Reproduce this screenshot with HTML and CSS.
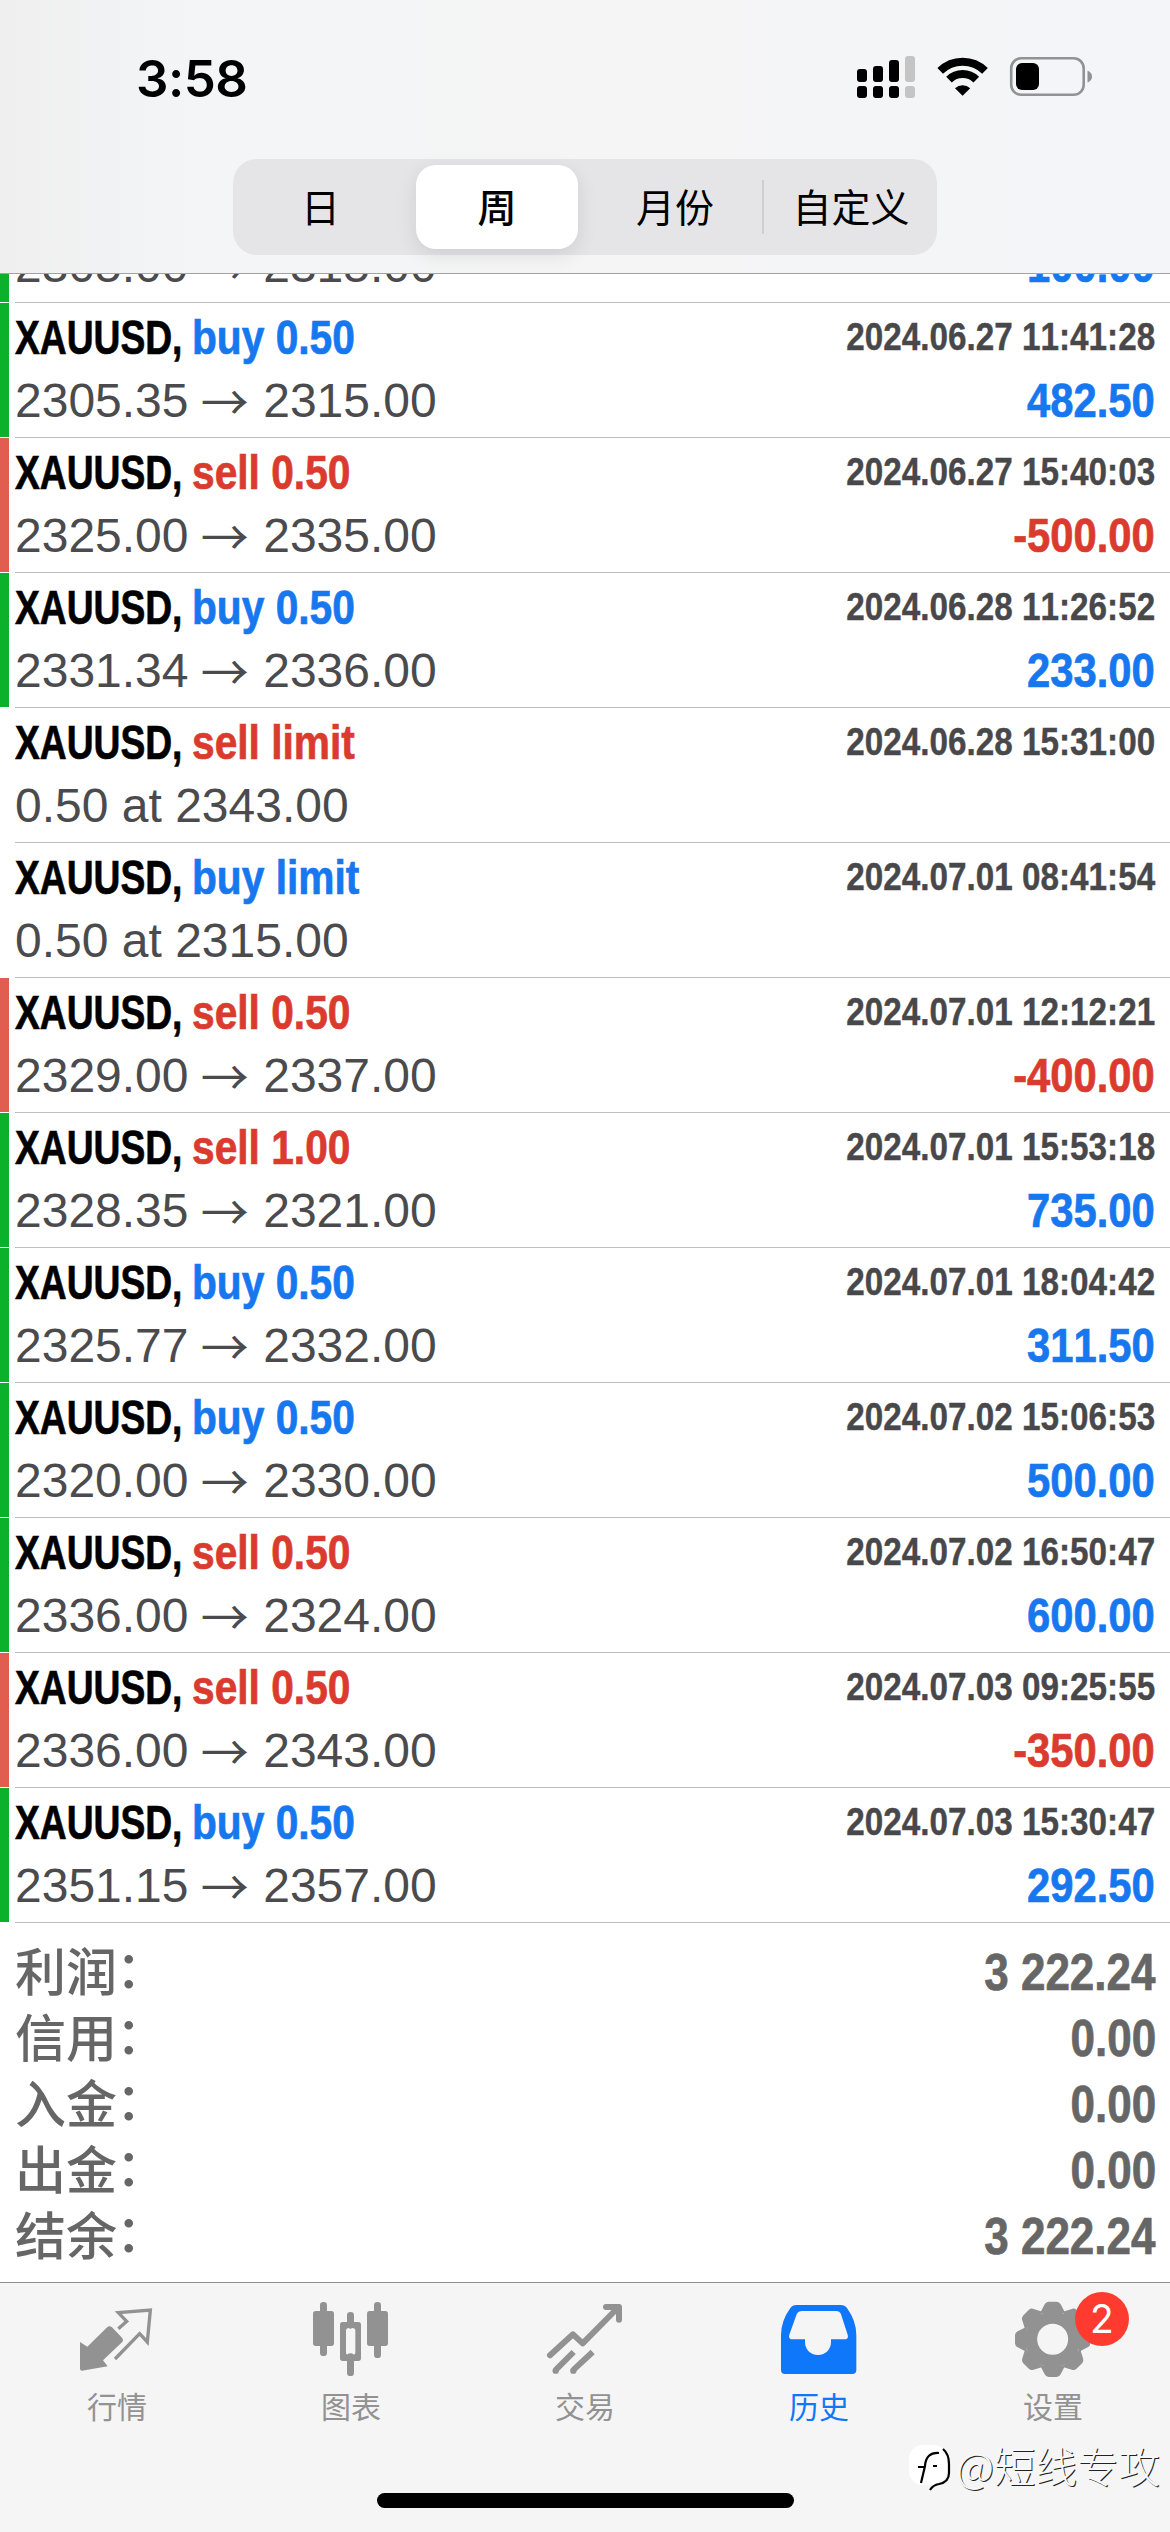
FILE: index.html
```html
<!DOCTYPE html>
<html lang="zh-CN">
<head>
<meta charset="utf-8">
<title>历史</title>
<link rel="stylesheet" href="styles.css">
</head>
<body>
<header class="top">
  <div class="status">
    <span class="time">3:58</span>
    <svg class="status-icons" viewBox="0 0 240 44" width="240" height="44">
      <g><rect x="1" y="15" width="10" height="13" rx="3"/><rect x="17" y="12" width="10" height="16" rx="3"/><rect x="33" y="6" width="10" height="22" rx="3"/><rect x="1" y="32" width="10" height="12" rx="3"/><rect x="17" y="32" width="10" height="12" rx="3"/><rect x="33" y="32" width="10" height="12" rx="3"/></g>
      <g fill="#c4c4c5"><rect x="49" y="2" width="10" height="26" rx="3"/><rect x="49" y="32" width="10" height="12" rx="3"/></g>
      <g fill="none" stroke="#000" stroke-width="8"><path d="M84.200 16.800A32 32 0 0 1 129 16.800"/><path d="M93 25.600A19.500 19.500 0 0 1 120.300 25.600"/></g>
      <path d="M99 34.200A11 11 0 0 1 114.200 34.200L106.600 41.800Z"/>
      <rect x="155.200" y="4.300" width="72.500" height="36.500" rx="10" fill="none" stroke="#929294" stroke-width="2.600"/>
      <rect x="160" y="9" width="23" height="27" rx="6"/>
      <path d="M231.500 16.500Q236 18.500 236 22.500T231.500 28.500Z" fill="#929294"/>
    </svg>
  </div>
  <nav class="segments">
    <span class="seg day">日</span><span class="seg active">周</span><span class="seg month">月份</span><span class="seg custom">自定义</span>
  </nav>
</header>

<main class="list">
  <article class="row gain partial"><div class="body"><div class="line"><span class="price">2305.00 <i>→</i> 2315.00</span><b class="amount buy">100.00</b></div></div></article>
  <article class="row gain"><div class="body"><div class="line"><b class="sym">XAUUSD,</b><b class="act buy">buy 0.50</b><time>2024.06.27 11:41:28</time></div><div class="line"><span class="price">2305.35 <i>→</i> 2315.00</span><b class="amount buy">482.50</b></div></div></article>
  <article class="row loss"><div class="body"><div class="line"><b class="sym">XAUUSD,</b><b class="act sell">sell 0.50</b><time>2024.06.27 15:40:03</time></div><div class="line"><span class="price">2325.00 <i>→</i> 2335.00</span><b class="amount sell">-500.00</b></div></div></article>
  <article class="row gain"><div class="body"><div class="line"><b class="sym">XAUUSD,</b><b class="act buy">buy 0.50</b><time>2024.06.28 11:26:52</time></div><div class="line"><span class="price">2331.34 <i>→</i> 2336.00</span><b class="amount buy">233.00</b></div></div></article>
  <article class="row"><div class="body"><div class="line"><b class="sym">XAUUSD,</b><b class="act sell">sell limit</b><time>2024.06.28 15:31:00</time></div><div class="line"><span class="price">0.50 at 2343.00</span></div></div></article>
  <article class="row"><div class="body"><div class="line"><b class="sym">XAUUSD,</b><b class="act buy">buy limit</b><time>2024.07.01 08:41:54</time></div><div class="line"><span class="price">0.50 at 2315.00</span></div></div></article>
  <article class="row loss"><div class="body"><div class="line"><b class="sym">XAUUSD,</b><b class="act sell">sell 0.50</b><time>2024.07.01 12:12:21</time></div><div class="line"><span class="price">2329.00 <i>→</i> 2337.00</span><b class="amount sell">-400.00</b></div></div></article>
  <article class="row gain"><div class="body"><div class="line"><b class="sym">XAUUSD,</b><b class="act sell">sell 1.00</b><time>2024.07.01 15:53:18</time></div><div class="line"><span class="price">2328.35 <i>→</i> 2321.00</span><b class="amount buy">735.00</b></div></div></article>
  <article class="row gain"><div class="body"><div class="line"><b class="sym">XAUUSD,</b><b class="act buy">buy 0.50</b><time>2024.07.01 18:04:42</time></div><div class="line"><span class="price">2325.77 <i>→</i> 2332.00</span><b class="amount buy">311.50</b></div></div></article>
  <article class="row gain"><div class="body"><div class="line"><b class="sym">XAUUSD,</b><b class="act buy">buy 0.50</b><time>2024.07.02 15:06:53</time></div><div class="line"><span class="price">2320.00 <i>→</i> 2330.00</span><b class="amount buy">500.00</b></div></div></article>
  <article class="row gain"><div class="body"><div class="line"><b class="sym">XAUUSD,</b><b class="act sell">sell 0.50</b><time>2024.07.02 16:50:47</time></div><div class="line"><span class="price">2336.00 <i>→</i> 2324.00</span><b class="amount buy">600.00</b></div></div></article>
  <article class="row loss"><div class="body"><div class="line"><b class="sym">XAUUSD,</b><b class="act sell">sell 0.50</b><time>2024.07.03 09:25:55</time></div><div class="line"><span class="price">2336.00 <i>→</i> 2343.00</span><b class="amount sell">-350.00</b></div></div></article>
  <article class="row gain"><div class="body"><div class="line"><b class="sym">XAUUSD,</b><b class="act buy">buy 0.50</b><time>2024.07.03 15:30:47</time></div><div class="line"><span class="price">2351.15 <i>→</i> 2357.00</span><b class="amount buy">292.50</b></div></div></article>
</main>

<section class="summary">
  <div class="total"><span>利润<em>：</em></span><b>3 222.24</b></div>
  <div class="total"><span>信用<em>：</em></span><b>0.00</b></div>
  <div class="total"><span>入金<em>：</em></span><b>0.00</b></div>
  <div class="total"><span>出金<em>：</em></span><b>0.00</b></div>
  <div class="total"><span>结余<em>：</em></span><b>3 222.24</b></div>
</section>

<footer class="tabs">
  <nav class="tab-row">
    <div class="tab">
      <svg viewBox="231 90 240 240"><path fill="currentColor" d="M240 216L262 230L320 173Q328 165 336 172L366 203Q372 210 366 217L309 271L323 289L246 302Q240 302 240 296Z"/><path fill="none" stroke="currentColor" stroke-width="10" d="M355 176L380 154L355 128L451 120L442 216L419 191L345 267"/></svg>
      <span>行情</span>
    </div>
    <div class="tab">
      <svg viewBox="933 90 240 240"><g fill="currentColor"><rect x="960" y="96" width="21" height="162" rx="10"/><rect x="939" y="123" width="63" height="105" rx="8"/><rect x="1041" y="126" width="21" height="50" rx="10"/><rect x="1041" y="250" width="21" height="68" rx="10"/><rect x="1122" y="96" width="21" height="168" rx="10"/><rect x="1101" y="123" width="63" height="105" rx="8"/><path fill-rule="evenodd" d="M1028 156H1075Q1083 156 1083 164V265Q1083 273 1075 273H1028Q1020 273 1020 265V164Q1020 156 1028 156ZM1046 174Q1038 174 1038 182V247Q1038 255 1046 255H1058Q1066 255 1066 247V182Q1066 174 1058 174Z"/></g></svg>
      <span>图表</span>
    </div>
    <div class="tab">
      <svg viewBox="285 90 240 240"><g fill="none" stroke="currentColor" stroke-width="18"><path stroke-linecap="round" stroke-linejoin="round" d="M300 256L369 193L398 220L503 114M468 111H507V149"/><path d="M371 246L318 299M428 246L371 299"/></g><circle cx="317" cy="302" r="9.500" fill="currentColor"/><circle cx="370" cy="302" r="9.500" fill="currentColor"/></svg>
      <span>交易</span>
    </div>
    <div class="tab selected">
      <svg viewBox="987 90 240 240"><path fill="currentColor" fill-rule="evenodd" d="M1039 105H1172Q1185 105 1191 114Q1219 153 1219 195V300Q1219 312 1207 312H1005Q993 312 993 300V195Q993 153 1021 114Q1027 105 1039 105ZM1056 123Q1045 123 1040 133L1018 194Q1014 208 1029 208H1065V216C1065 238 1081 255 1104 255S1143 238 1143 216V208H1182Q1197 208 1193 194L1173 133Q1169 123 1158 123Z"/></svg>
      <span>历史</span>
    </div>
    <div class="tab">
      <div class="gear">
        <svg viewBox="489 90 240 240"><defs><path id="tooth" d="M-38 -78L-24 -105Q-20 -113 -12 -113H12Q20 -113 24 -105L38 -78Z"/></defs><g transform="translate(608 208)" fill="currentColor"><circle r="65" fill="none" stroke="currentColor" stroke-width="37"/><use href="#tooth"/><use href="#tooth" transform="rotate(45)"/><use href="#tooth" transform="rotate(90)"/><use href="#tooth" transform="rotate(135)"/><use href="#tooth" transform="rotate(180)"/><use href="#tooth" transform="rotate(225)"/><use href="#tooth" transform="rotate(270)"/><use href="#tooth" transform="rotate(315)"/></g></svg>
        <span class="badge">2</span>
      </div>
      <span>设置</span>
    </div>
  </nav>
  <div class="home-bar"></div>
  <div class="watermark">
    <svg viewBox="0 0 44 48" width="44" height="48"><rect x="1" y="1" width="38" height="40" rx="14" fill="#fff"/><path d="M35 5Q41 10 41 20V29Q41 38 31 40Q25 41 22 46M31 9Q18 8 17 22L13 39M10 23H17M25 22H29" fill="none" stroke="#000" stroke-width="2.200"/></svg>
    <span>@短线专攻</span>
  </div>
</footer>
</body>
</html>
```
FILE: styles.css
```css
* { box-sizing: border-box; }

body {
  margin: 0;
  width: 1170px;
  height: 2532px;
  overflow: hidden;
  display: flex;
  flex-direction: column;
  background: #fff;
  font-family: "Liberation Sans", "Noto Sans CJK SC", sans-serif;
  font-kerning: none;
}

.top {
  height: 274px;
  flex: none;
  border-bottom: 1px solid #a3a3a5;
  background: linear-gradient(90deg, #efefef 0, #f4f5f7 200px, #f5f5f5 600px, #f4f5f9 1170px);
}

.status {
  height: 159px;
  padding: 54px 74px 0 136px;
  display: flex;
  justify-content: space-between;
  align-items: flex-start;
}

.time {
  font: 600 51px/49px Inter, sans-serif;
  letter-spacing: -0.5px;
}

.segments {
  width: 704px;
  height: 96px;
  margin: 0 auto;
  padding: 6px;
  border-radius: 24px;
  background: #e5e5e7;
  display: grid;
  grid-template-columns: 177px 162px 184px 169px;
}

.seg {
  display: flex;
  align-items: center;
  justify-content: center;
  padding-bottom: 4px;
  font: 400 39px/80px "Noto Sans CJK SC", sans-serif;
}

.seg.day { padding-right: 14px; }
.seg.month { padding-left: 10px; }

.seg.active {
  background: #fff;
  border-radius: 20px;
  font-weight: 500;
  box-shadow: 0 6px 20px rgba(0, 0, 0, 0.1);
}

.seg.custom {
  padding-left: 9px;
  background: linear-gradient(#cfcfd1, #cfcfd1) 0 50% / 2px 54px no-repeat;
}

.list {
  flex: none;
}

.row {
  height: 135px;
  display: grid;
  grid-template-columns: 9px 1fr;
  column-gap: 6px;
}

.row::before {
  content: "";
  height: 134px;
}

.gain::before { background: #0cb12b; }
.loss::before { background: #e05d4f; }

.body {
  padding: 5px 15px 0 0;
  border-bottom: 1px solid #bdbdbf;
}

.line {
  display: flex;
  height: 62px;
  font-size: 48px;
  line-height: 62px;
  white-space: nowrap;
}

/* row scrolled under the header: only its lower edge shows */
.partial {
  height: 29px;
  overflow: hidden;
}

.partial::before { height: 28px; }

.partial .body {
  height: 29px;
  display: flex;
  flex-direction: column;
  justify-content: flex-end;
  padding: 0 15px 5px 0;
}

.partial .line { flex: none; }

.sym, .act {
  line-height: 60px;
  transform-origin: 0 50%;
  -webkit-text-stroke: 0.7px currentColor;
}

.sym {
  width: 177px;
  transform: scaleX(0.775);
}

.act { transform: scaleX(0.848); }

.buy { color: #1777ee; }
.sell { color: #db3b2e; }

time {
  margin-left: auto;
  font-size: 39px;
  font-weight: 700;
  line-height: 57px;
  color: #48484b;
  transform: scaleX(0.853);
  transform-origin: 100% 50%;
  -webkit-text-stroke: 0.4px currentColor;
}

.price { color: #4b4b4e; }

.price i {
  display: inline-block;
  width: 48px;
  height: 62px;
  margin-left: -1px;
  margin-right: 1px;
  vertical-align: top;
  font: 400 48px/58px "Noto Sans CJK SC", sans-serif;
}

.amount {
  margin-left: auto;
  transform: scaleX(0.87);
  transform-origin: 100% 50%;
  -webkit-text-stroke: 0.7px currentColor;
}

.summary {
  flex: 1;
  padding: 17px 14px 0 15px;
}

.total {
  height: 66px;
  display: flex;
  justify-content: space-between;
  color: #666;
  line-height: 66px;
}

.total span {
  font: 500 51px/58px "Noto Sans CJK SC", sans-serif;
}

.total em {
  display: inline-block;
  font-style: normal;
  transform: translate(-1px, -3px);
}

.total b {
  font-size: 51px;
  transform: scaleX(0.863);
  transform-origin: 100% 50%;
  -webkit-text-stroke: 0.7px currentColor;
}

.tabs {
  position: relative;
  flex: none;
  height: 250px;
  border-top: 1px solid #8f8f92;
  background: #f5f5f5;
}

.tab-row {
  display: grid;
  grid-template-columns: repeat(5, 1fr);
  padding-top: 17px;
  height: 210px;
}

.tab {
  display: flex;
  flex-direction: column;
  align-items: center;
  color: #929292;
  font: 400 30px/40px "Noto Sans CJK SC", sans-serif;
}

.tab svg {
  display: block;
  width: 80px;
  height: 80px;
  margin-bottom: 5px;
}

.selected { color: #0f78fa; }

.gear { position: relative; }

.badge {
  position: absolute;
  left: 62px;
  top: -8px;
  width: 54px;
  height: 54px;
  border-radius: 50%;
  background: #ff3b30;
  color: #fff;
  font: 400 39px/54px Inter, sans-serif;
  text-align: center;
}

.home-bar {
  width: 417px;
  height: 15px;
  margin: 0 auto;
  border-radius: 8px;
  background: #000;
}

.watermark {
  position: absolute;
  right: 10px;
  top: 155px;
  display: flex;
  align-items: center;
  gap: 4px;
  font: 300 41.500px/50px "Noto Sans CJK SC", sans-serif;
  color: #f8f8f8;
  text-shadow: 1px 1px 0 #222;
}

.watermark svg { margin-top: 6px; }
```
